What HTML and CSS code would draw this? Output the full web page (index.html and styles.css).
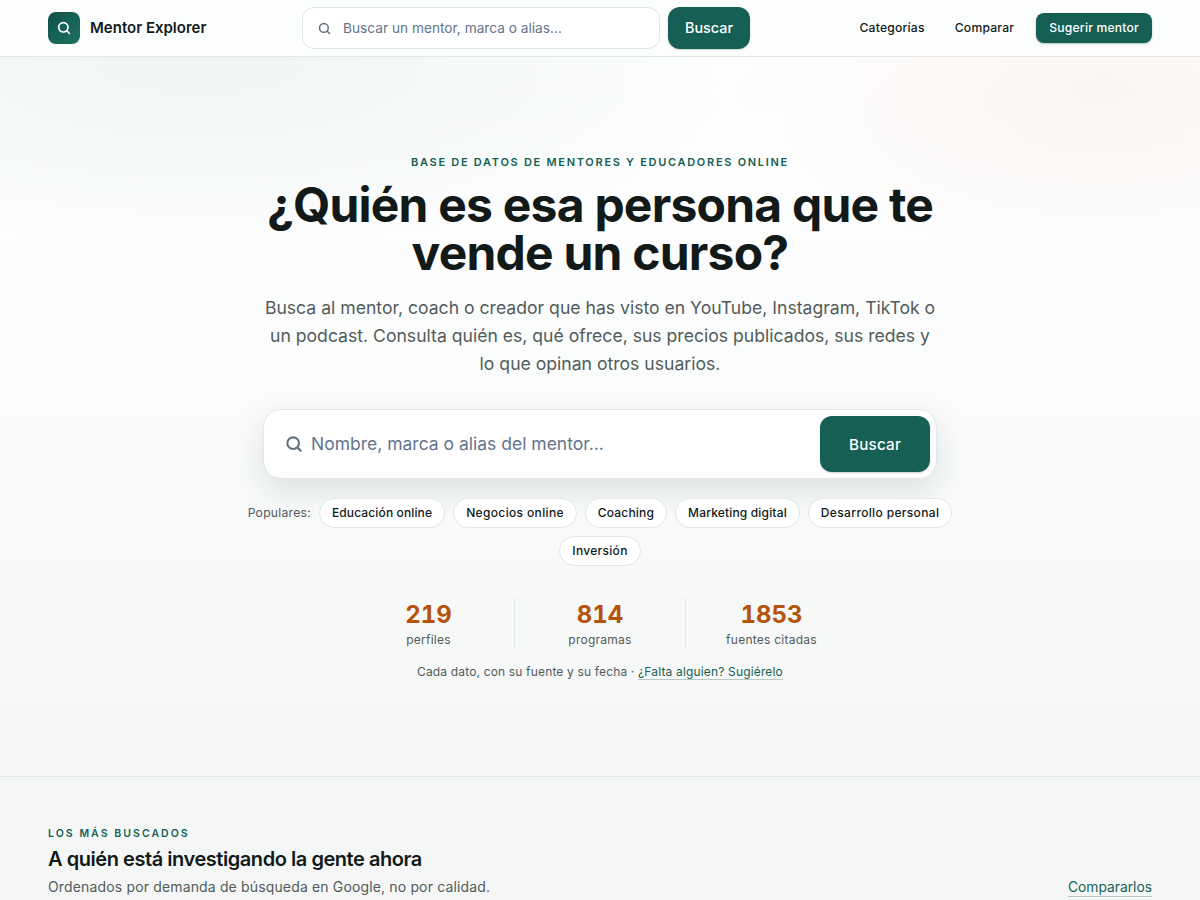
FILE: index.html
```html
<!DOCTYPE html>
<html lang="es">
<head>
<meta charset="utf-8">
<title>Mentor Explorer</title>
<link rel="stylesheet" href="styles.css">
</head>
<body>
<header class="topbar">
  <a class="brand" href="#">
    <span class="brand-mark">
      <svg class="icon-brand" viewBox="0 0 24 24"><circle cx="11" cy="11" r="7"/><path d="m20 20-3.5-3.5"/></svg>
    </span>
    <span class="brand-name">Mentor Explorer</span>
  </a>
  <form class="top-search">
    <div class="top-field">
      <svg class="icon-top" viewBox="0 0 24 24"><circle cx="11" cy="11" r="7"/><path d="m20 20-3.5-3.5"/></svg>
      <span class="top-placeholder">Buscar un mentor, marca o alias...</span>
    </div>
    <button class="top-btn" type="button">Buscar</button>
  </form>
  <nav class="nav">
    <a class="nav-link" href="#">Categorías</a>
    <a class="nav-link" href="#">Comparar</a>
    <a class="nav-cta" href="#">Sugerir mentor</a>
  </nav>
</header>

<section class="hero">
  <p class="eyebrow">BASE DE DATOS DE MENTORES Y EDUCADORES ONLINE</p>
  <h1 class="title">¿Quién es esa persona que te vende un curso?</h1>
  <p class="lead">Busca al mentor, coach o creador que has visto en YouTube, Instagram, TikTok o un podcast. Consulta quién es, qué ofrece, sus precios publicados, sus redes y lo que opinan otros usuarios.</p>
  <form class="hero-search">
    <svg class="icon-hero" viewBox="0 0 24 24"><circle cx="11" cy="11" r="7"/><path d="m20 20-3.5-3.5"/></svg>
    <span class="hero-placeholder">Nombre, marca o alias del mentor...</span>
    <button class="hero-btn" type="button">Buscar</button>
  </form>
  <div class="popular">
    <span class="popular-label">Populares:</span>
    <a class="chip chip-tight" href="#">Educación online</a>
    <a class="chip chip-wide" href="#">Negocios online</a>
    <a class="chip" href="#">Coaching</a>
    <a class="chip" href="#">Marketing digital</a>
    <a class="chip chip-wide" href="#">Desarrollo personal</a>
    <a class="chip chip-wider" href="#">Inversión</a>
  </div>
  <div class="stats">
    <div class="stat"><strong class="stat-num">219</strong><span class="stat-label">perfiles</span></div>
    <div class="stat"><strong class="stat-num">814</strong><span class="stat-label">programas</span></div>
    <div class="stat"><strong class="stat-num">1853</strong><span class="stat-label">fuentes citadas</span></div>
  </div>
  <p class="note">Cada dato, con su fuente y su fecha · <a class="note-link" href="#">¿Falta alguien? Sugiérelo</a></p>
</section>

<section class="ranking">
  <div class="ranking-head">
    <div>
      <p class="section-eyebrow">LOS MÁS BUSCADOS</p>
      <h2 class="section-title">A quién está investigando la gente ahora</h2>
      <p class="section-sub">Ordenados por demanda de búsqueda en Google, no por calidad.</p>
    </div>
    <a class="section-link" href="#">Compararlos</a>
  </div>
</section>
</body>
</html>
```
FILE: styles.css
```css
* { box-sizing: border-box; }
html, body { margin: 0; padding: 0; }
body {
  font-family: Inter, "Liberation Sans", sans-serif;
  background: #f5f7f7;
  color: #111a19;
  height: 900px;
  overflow: hidden;
}
a { text-decoration: none; color: inherit; }
p, h1, h2 { margin: 0; }

.topbar {
  height: 57px;
  padding: 0 48px;
  display: grid;
  grid-template-columns: 254px 448px 1fr;
  align-items: center;
  background: #fcfdfd;
  border-bottom: 1px solid #e3e7e7;
}
.brand { display: flex; align-items: center; gap: 10px; }
.brand-mark {
  width: 32px; height: 32px;
  border-radius: 8px;
  background: linear-gradient(135deg, #0f5148, #1e7263);
  display: flex; align-items: center; justify-content: center;
}
.icon-brand { width: 16px; height: 16px; fill: none; stroke: #fff; stroke-width: 2.6; stroke-linecap: round; }
.brand-name { font-size: 15px; font-weight: 600; line-height: 20px; color: #111a19; }

.top-search { display: flex; gap: 8px; }
.top-field {
  width: 358px; height: 42px;
  padding: 0 14px;
  display: flex; align-items: center; gap: 11px;
  background: #fff;
  border: 1px solid #e3e7e7;
  border-radius: 12px;
}
.icon-top { width: 15px; height: 15px; fill: none; stroke: #64707f; stroke-width: 2.4; stroke-linecap: round; }
.top-placeholder { font-size: 13.7px; line-height: 16px; color: #64748b; }
.top-btn {
  width: 82px; height: 42px;
  padding: 0;
  border: 0; border-radius: 12px;
  background: #155f55; color: #fff;
  font: 500 14.4px/16px Inter, sans-serif;
  box-shadow: 0 1px 2px rgba(16,24,24,.2);
}
.nav { display: flex; justify-content: flex-end; align-items: center; gap: 6px; }
.nav-link { padding: 8px 12px; font-size: 12.16px; line-height: 14px; font-weight: 500; letter-spacing: .2px; color: #111a19; }
.nav-cta {
  margin-left: 4px;
  padding: 0 13px; height: 30px;
  display: flex; align-items: center;
  border-radius: 8px;
  background: #155f55; color: #fff;
  font-size: 12.16px; line-height: 14px; font-weight: 500; letter-spacing: .2px;
  box-shadow: 0 1px 2px rgba(21,95,85,.35);
}

.hero {
  height: 720px;
  padding-top: 97px;
  display: flex; flex-direction: column; align-items: center;
  background:
    radial-gradient(ellipse 620px 190px at 200px 0, rgba(21,95,85,.065), transparent 100%),
    radial-gradient(ellipse 380px 170px at 1100px 30px, rgba(180,83,9,.055), transparent 100%),
    linear-gradient(180deg, #ffffff 0%, #f5f7f7 100%);
  border-bottom: 1px solid #e3e7e7;
}
.eyebrow { font-size: 11px; font-weight: 600; letter-spacing: 1.71px; line-height: 16px; color: #155f55; }
.title {
  width: 720px; margin-top: 11px;
  font-size: 48px; font-weight: 700; line-height: 48px; letter-spacing: -.78px;
  text-align: center; color: #111a19;
}
.lead {
  width: 674px; margin-top: 17px;
  font-size: 17.6px; line-height: 28px; text-align: center; color: #525b5a;
}
.hero-search {
  width: 674px; height: 70px; margin-top: 31px;
  padding: 6px 6px 6px 20px;
  display: flex; align-items: center;
  background: #fff;
  border: 1px solid #e3e7e7;
  border-radius: 18px;
  box-shadow: 0 12px 32px rgba(15,60,55,.13);
}
.icon-hero { width: 20px; height: 20px; fill: none; stroke: #64707f; stroke-width: 2.5; stroke-linecap: round; }
.hero-placeholder { flex: 1; margin-left: 7px; font-size: 17.5px; line-height: 24px; color: #64748b; }
.hero-btn {
  width: 110px; height: 56px;
  padding: 1px 0 0;
  border: 0; border-radius: 12px;
  background: #155f55; color: #fff;
  font: 500 15.2px/20px Inter, sans-serif;
  letter-spacing: .2px;
  box-shadow: 0 1px 2px rgba(16,24,24,.2);
}
.popular {
  width: 720px; margin-top: 19px;
  display: flex; flex-wrap: wrap; justify-content: center; align-items: center; gap: 8px;
}
.popular-label { padding-bottom: 1px; font-size: 12.16px; letter-spacing: .25px; color: #525b5a; }
.chip {
  height: 30px; padding: 0 12px 1px;
  display: flex; align-items: center;
  background: #fff;
  border: 1px solid #e3e7e7;
  border-radius: 15px;
  font-size: 12px; font-weight: 500; letter-spacing: .17px; color: #111a19;
}
.chip-tight { letter-spacing: .13px; }
.chip-wide { letter-spacing: .35px; }
.chip-wider { letter-spacing: .3px; }
.stats { display: grid; grid-template-columns: 171px 171px 172px; margin-top: 32px; }
.stat {
  height: 50px;
  display: flex; flex-direction: column; align-items: center;
  border-left: 1px solid #e3e7e7;
}
.stat:first-child { border-left: 0; }
.stat-num { font-size: 24px; font-weight: 700; line-height: 34px; font-variant-numeric: tabular-nums; color: #b45309; }
.stat-label { margin-top: -2px; font-size: 12px; line-height: 20px; letter-spacing: .25px; color: #525b5a; }
.note { margin-top: 15px; font-size: 12px; line-height: 18px; letter-spacing: .16px; color: #525b5a; }
.note-link { color: #155f55; border-bottom: 1px solid #b6c9c6; }

.ranking { padding: 50px 48px 0; }
.ranking-head { display: flex; justify-content: space-between; align-items: flex-end; }
.section-eyebrow { font-size: 10.5px; font-weight: 600; letter-spacing: 2.05px; line-height: 14px; color: #155f55; }
.section-title { margin-top: 4px; font-size: 20px; font-weight: 600; line-height: 28px; letter-spacing: -.45px; color: #111a19; }
.section-sub { margin-top: 4px; font-size: 14px; line-height: 20px; letter-spacing: .15px; color: #525b5a; }
.section-link { font-size: 13.8px; line-height: 18px; color: #155f55; border-bottom: 1px solid #b6c9c6; }
```
